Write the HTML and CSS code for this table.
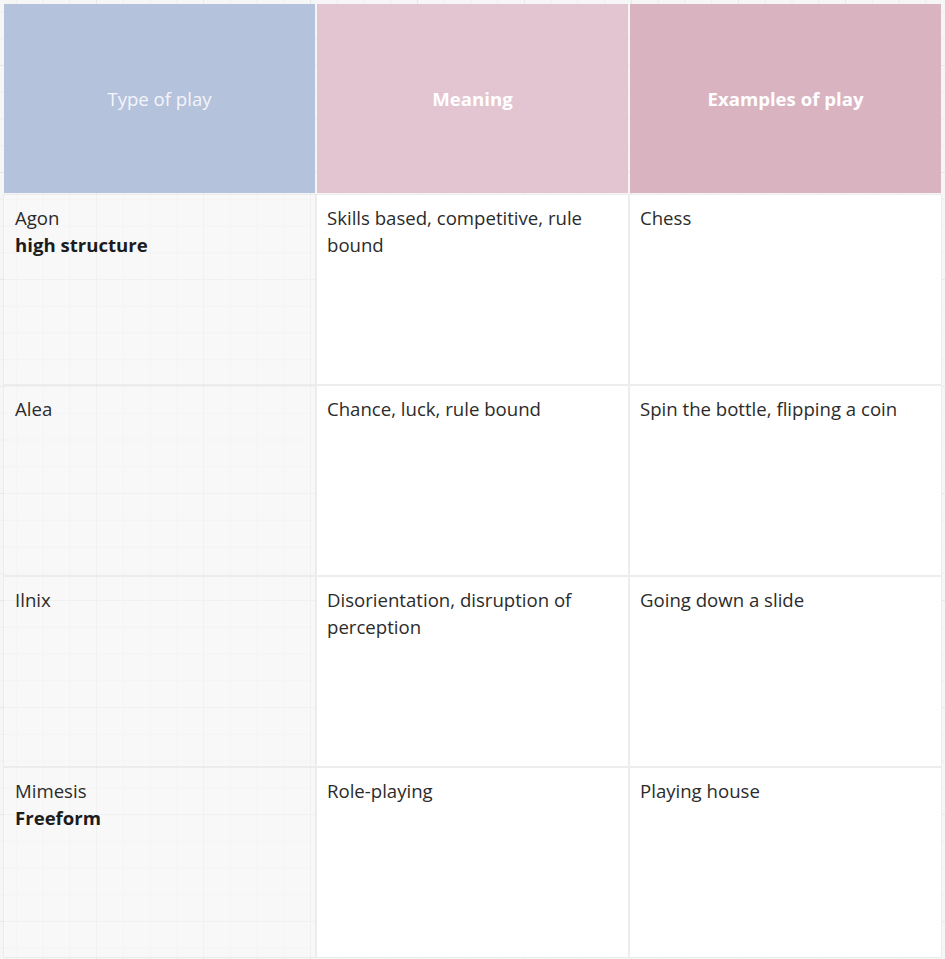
FILE: index.html
```html
<!DOCTYPE html>
<html>
<head>
<meta charset="utf-8">
<link rel="stylesheet" href="styles.css">
</head>
<body>
<div class="board">
  <div class="table">
    <div class="cell head head-type">Type of play</div>
    <div class="cell head head-meaning bold">Meaning</div>
    <div class="cell head head-examples bold">Examples of play</div>

    <div class="cell first">Agon<br><b>high structure</b></div>
    <div class="cell">Skills based, competitive, rule bound</div>
    <div class="cell">Chess</div>

    <div class="cell first">Alea</div>
    <div class="cell">Chance, luck, rule bound</div>
    <div class="cell">Spin the bottle, flipping a coin</div>

    <div class="cell first">Ilnix</div>
    <div class="cell">Disorientation, disruption of perception</div>
    <div class="cell">Going down a slide</div>

    <div class="cell first">Mimesis<br><b>Freeform</b></div>
    <div class="cell">Role-playing</div>
    <div class="cell">Playing house</div>
  </div>
</div>
</body>
</html>
```

FILE: styles.css
```css
html, body {
  margin: 0;
  padding: 0;
}
body {
  width: 945px;
  height: 959px;
  overflow: hidden;
  background-color: #f6f6f6;
  background-image:
    linear-gradient(to right, #e8e8e8 1px, transparent 1px),
    linear-gradient(to bottom, #e8e8e8 1px, transparent 1px),
    linear-gradient(to right, #eeeeee 1px, transparent 1px),
    linear-gradient(to bottom, #eeeeee 1px, transparent 1px);
  background-size: 107px 107px, 107px 107px, 26.75px 26.75px, 26.75px 26.75px;
  background-position: 96px 0, 0 65px, 15.75px 0, 0 11.5px;
  font-family: "Open Sans", "Noto Sans", sans-serif;
}
.board {
  padding: 4px 0 0 4px;
}
.table {
  display: grid;
  grid-template-columns: 311px 311px 311px;
  grid-auto-rows: 189px;
  gap: 2px;
  width: 937px;
}
.cell {
  background: #ffffff;
  box-shadow: 0 0 0 1px #ededed;
  padding: 9px 10px 0 10px;
  font-size: 18.6px;
  line-height: 27px;
  color: #2b2b2b;
  box-sizing: border-box;
}
.cell b {
  font-weight: 700;
  color: #1c1c1c;
}
.cell.first {
  padding-left: 11px;
  background: rgba(250, 250, 250, 0.5);
  box-shadow: 0 0 0 1px rgba(230, 230, 230, 0.6);
}
.head {
  display: flex;
  align-items: center;
  justify-content: center;
  padding: 0;
  color: #ffffff;
  box-shadow: none;
}
.head-type {
  background: #b4c2dc;
  color: #f4f5fa;
}
.head-meaning {
  background: #e3c5d1;
}
.head-examples {
  background: #dab3c1;
}
.bold {
  font-weight: 700;
}
```
